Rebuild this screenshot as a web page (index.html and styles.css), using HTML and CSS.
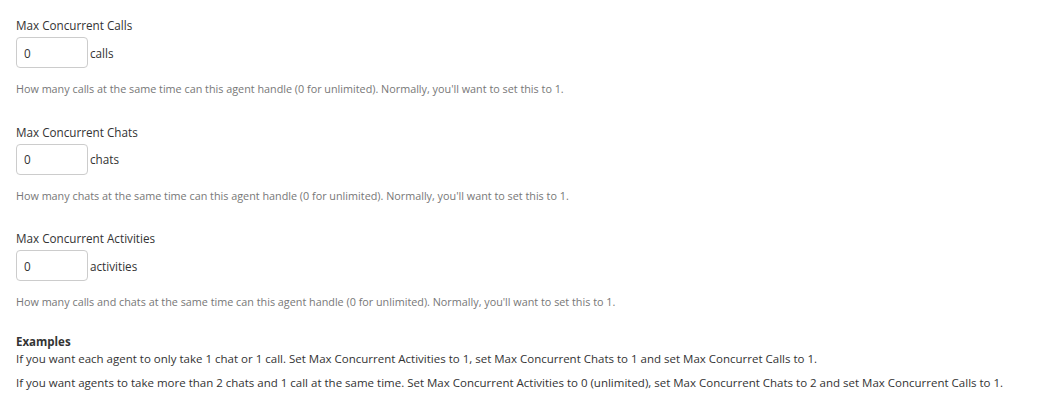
FILE: index.html
```html
<!DOCTYPE html>
<html lang="en">
<head>
  <meta charset="UTF-8">
  <title>Agent limits</title>
  <link rel="stylesheet" href="styles.css">
</head>
<body>
  <div class="form">
    <div class="field">
      <label class="label">Max Concurrent Calls</label>
      <div class="row"><input type="text" value="0"><span class="unit">calls</span></div>
      <p class="help">How many calls at the same time can this agent handle (0 for unlimited). Normally, you'll want to set this to 1.</p>
    </div>
    <div class="field">
      <label class="label">Max Concurrent Chats</label>
      <div class="row"><input type="text" value="0"><span class="unit">chats</span></div>
      <p class="help">How many chats at the same time can this agent handle (0 for unlimited). Normally, you'll want to set this to 1.</p>
    </div>
    <div class="field last">
      <label class="label">Max Concurrent Activities</label>
      <div class="row"><input type="text" value="0"><span class="unit">activities</span></div>
      <p class="help">How many calls and chats at the same time can this agent handle (0 for unlimited). Normally, you'll want to set this to 1.</p>
    </div>
    <div class="examples">
      <h4>Examples</h4>
      <p>If you want each agent to only take 1 chat or 1 call. Set Max Concurrent Activities to 1, set Max Concurrent Chats to 1 and set Max Concurret Calls to 1.</p>
      <p>If you want agents to take more than 2 chats and 1 call at the same time. Set Max Concurrent Activities to 0 (unlimited), set Max Concurrent Chats to 2 and set Max Concurrent Calls to 1.</p>
    </div>
  </div>
</body>
</html>
```

FILE: styles.css
```css
* {
  margin: 0;
  padding: 0;
  box-sizing: border-box;
}
body {
  background-color: #fff;
  font-family: "Open Sans", sans-serif;
  color: #333;
}
.form {
  padding: 17px 16px 16px;
}
.field {
  margin-bottom: 27.5px;
}
.field.last {
  margin-bottom: 24px;
}
.label {
  display: block;
  font-size: 11.7px;
  line-height: 16px;
  margin-bottom: 4px;
  color: #333;
}
.row {
  display: flex;
  align-items: center;
}
.row input {
  width: 72px;
  height: 31px;
  border: 1px solid #ccc;
  border-radius: 4px;
  padding: 0 7px;
  font-family: "Open Sans", sans-serif;
  font-size: 11.7px;
  color: #333;
}
.unit {
  font-size: 11.7px;
  margin-left: 2px;
}
.help {
  font-size: 10.8px;
  line-height: 14px;
  color: #777;
  margin-top: 14px;
}
.examples h4 {
  font-size: 11.5px;
  font-weight: 700;
  line-height: 17px;
}
.examples p {
  font-size: 11.5px;
  line-height: 17px;
  margin-bottom: 7px;
}
```
